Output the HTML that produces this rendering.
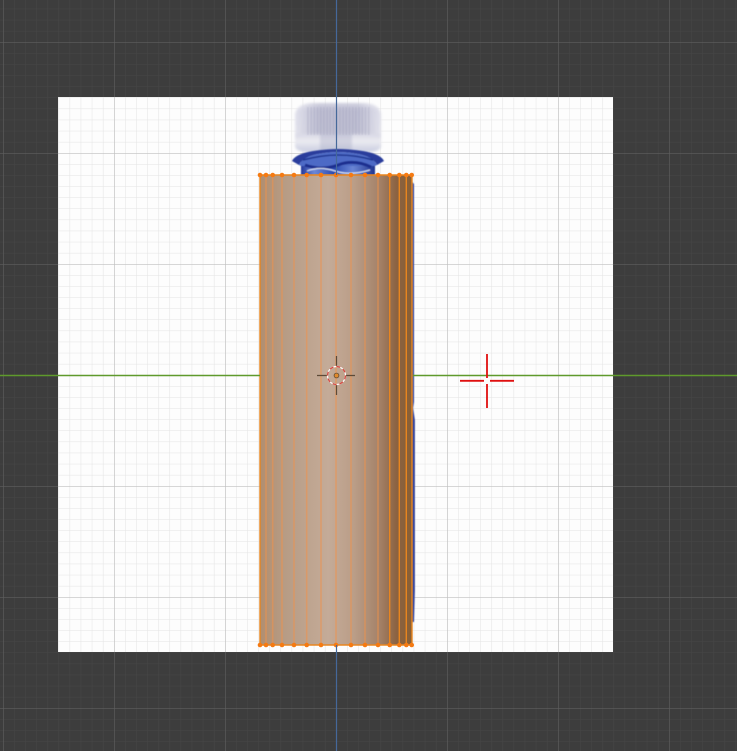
<!DOCTYPE html>
<html><head><meta charset="utf-8"><title>UV Editor</title>
<style>html,body{margin:0;padding:0;background:#3d3d3d}svg{display:block}</style></head>
<body>
<svg width="737" height="751" viewBox="0 0 737 751" xmlns="http://www.w3.org/2000/svg">
<defs>
<pattern id="dMinor" width="11.1" height="11.1" patternUnits="userSpaceOnUse" x="3" y="42">
<path d="M0 0H11.1M0 0V11.1" stroke="#474747" stroke-width="1" fill="none"/>
</pattern>
<pattern id="dMajor" width="111" height="111" patternUnits="userSpaceOnUse" x="3" y="42">
<path d="M0 0H111M0 0V111" stroke="#5f5f5f" stroke-width="1.2" fill="none"/>
</pattern>
<pattern id="lMinor" width="11.1" height="11.1" patternUnits="userSpaceOnUse" x="3" y="42">
<path d="M0 0H11.1M0 0V11.1" stroke="#e3e3e3" stroke-width="1" fill="none"/>
</pattern>
<pattern id="lMajor" width="111" height="111" patternUnits="userSpaceOnUse" x="3" y="42">
<path d="M0 0H111M0 0V111" stroke="#bfbfbf" stroke-width="1.3" fill="none"/>
</pattern>
<linearGradient id="body" x1="0" x2="1" y1="0" y2="0">
<stop offset="0" stop-color="#b08e70"/>
<stop offset=".15" stop-color="#b69b84"/>
<stop offset=".45" stop-color="#c4ab98"/>
<stop offset=".62" stop-color="#ba9d87"/>
<stop offset=".78" stop-color="#a5836a"/>
<stop offset=".9" stop-color="#8b6241"/>
<stop offset="1" stop-color="#8a5f34"/>
</linearGradient>
<linearGradient id="cap" x1="0" x2="0" y1="0" y2="1">
<stop offset="0" stop-color="#dcdcea" stop-opacity=".5"/>
<stop offset=".15" stop-color="#d2d2e2"/>
<stop offset=".6" stop-color="#d4d4e2"/>
<stop offset=".78" stop-color="#ebebf1"/>
<stop offset="1" stop-color="#c8ccdf"/>
</linearGradient>
<linearGradient id="capx" x1="0" x2="1" y1="0" y2="0">
<stop offset="0" stop-color="#fff" stop-opacity=".35"/>
<stop offset=".28" stop-color="#8e8fae" stop-opacity=".3"/>
<stop offset=".72" stop-color="#8e8fae" stop-opacity=".3"/>
<stop offset="1" stop-color="#fff" stop-opacity=".35"/>
</linearGradient>
<pattern id="rib" width="3.2" height="40" patternUnits="userSpaceOnUse">
<rect width="1.5" height="40" fill="#8f90b0" opacity=".25"/>
</pattern>
<linearGradient id="neck" x1="0" x2="1" y1="0" y2="0">
<stop offset="0" stop-color="#24389a"/>
<stop offset=".18" stop-color="#6d88d6"/>
<stop offset=".45" stop-color="#2a49b0"/>
<stop offset=".7" stop-color="#6a85d4"/>
<stop offset="1" stop-color="#20348f"/>
</linearGradient>
<filter id="b1" x="-10%" y="-10%" width="120%" height="120%"><feGaussianBlur stdDeviation="1.3"/></filter>
<filter id="b2" x="-10%" y="-10%" width="120%" height="120%"><feGaussianBlur stdDeviation=".6"/></filter>
</defs>

<rect width="737" height="751" fill="#3d3d3d"/>
<rect width="737" height="751" fill="url(#dMinor)"/>
<rect width="737" height="751" fill="url(#dMajor)"/>

<rect x="58" y="97" width="555" height="555" fill="#fdfdfd"/>
<rect x="58" y="97" width="555" height="555" fill="url(#lMinor)"/>
<rect x="58" y="97" width="555" height="555" fill="url(#lMajor)"/>

<!-- bottle cap -->
<g filter="url(#b1)">
<path d="M295 114Q297 103 314 103H362Q379 103 381 114V146Q381 153 360 152H316Q295 153 295 146Z" fill="url(#cap)"/>
<path d="M295 114Q297 103 314 103H362Q379 103 381 114V134H295Z" fill="url(#capx)"/>
<path d="M320 134V152H352V134Z" fill="#a4a6c2" opacity=".35"/>
</g>
<rect x="306" y="107" width="64" height="28" fill="url(#rib)" filter="url(#b2)"/>
<!-- neck -->
<g filter="url(#b2)">
<rect x="301" y="157" width="74" height="18" fill="url(#neck)"/>
<path d="M292 161Q297 150 338 149Q379 150 384 161L377 165Q372 153 338 152Q304 153 299 165Z" fill="#2a3d9c"/>
<path d="M299 165Q304 153 338 152Q372 153 377 165L375 166H301Z" fill="#4d6bc6"/>
<path d="M303 160Q322 155 338 155Q356 155 373 160" stroke="#1f3490" stroke-width="1.6" fill="none"/>
<path d="M305 165Q322 171 338 165T371 167" stroke="#1b2f8f" stroke-width="3" fill="none"/>
<path d="M307 171Q320 166 335 171T370 170" stroke="#d4def5" stroke-width="1.2" fill="none"/>
</g>

<!-- blue edge behind body -->
<path d="M412 182L414 184V402L413 408L415 420V590L414 622H410V182Z" fill="#3d4a9a" filter="url(#b2)"/>

<!-- UV island -->
<rect x="260" y="175" width="152" height="470" fill="url(#body)"/>
<g stroke="#f0924a" stroke-width="1.6" fill="none" opacity=".55">
<path d="M266 175V645M272.7 175V645M282 175V645M294 175V645M306.7 175V645M321 175V645M336 175V645M351 175V645M365 175V645M378 175V645"/>
</g>
<g stroke="#e8851f" stroke-width="1.4" fill="none">
<path d="M389.7 175V645M399.3 175V645M406.3 175V645"/>
<path d="M260 175H412V645H260Z"/>
</g>
<g fill="#f57a12">
<circle cx="260" cy="175" r="2.3"/><circle cx="266" cy="175" r="2.3"/><circle cx="272.7" cy="175" r="2.3"/><circle cx="282" cy="175" r="2.3"/><circle cx="294" cy="175" r="2.3"/><circle cx="306.7" cy="175" r="2.3"/><circle cx="321" cy="175" r="2.3"/><circle cx="336" cy="175" r="2.3"/><circle cx="351" cy="175" r="2.3"/><circle cx="365" cy="175" r="2.3"/><circle cx="378" cy="175" r="2.3"/><circle cx="389.7" cy="175" r="2.3"/><circle cx="399.3" cy="175" r="2.3"/><circle cx="406.3" cy="175" r="2.3"/><circle cx="411.7" cy="175" r="2.3"/>
<circle cx="260" cy="645" r="2.3"/><circle cx="266" cy="645" r="2.3"/><circle cx="272.7" cy="645" r="2.3"/><circle cx="282" cy="645" r="2.3"/><circle cx="294" cy="645" r="2.3"/><circle cx="306.7" cy="645" r="2.3"/><circle cx="321" cy="645" r="2.3"/><circle cx="336" cy="645" r="2.3"/><circle cx="351" cy="645" r="2.3"/><circle cx="365" cy="645" r="2.3"/><circle cx="378" cy="645" r="2.3"/><circle cx="389.7" cy="645" r="2.3"/><circle cx="399.3" cy="645" r="2.3"/><circle cx="406.3" cy="645" r="2.3"/><circle cx="411.7" cy="645" r="2.3"/>
</g>

<!-- axes -->
<path d="M0 375.5H260M413 375.5H737" stroke="#5f9a2c" stroke-width="1.4" fill="none"/>
<path d="M336.5 0V175M336.5 645V751" stroke="#45689a" stroke-width="1.2" fill="none"/>

<!-- pivot cursor -->
<path d="M317 375.5H327M345 375.5H355M336.5 356V366M336.5 385V395" stroke="#5d4a37" stroke-width="1.2" fill="none"/>
<circle cx="336.5" cy="375.5" r="9" fill="none" stroke="#fff" stroke-width="1.2"/>
<circle cx="336.5" cy="375.5" r="9" fill="none" stroke="#d8453f" stroke-width="1.2" stroke-dasharray="4 3"/>
<circle cx="336.5" cy="375.5" r="2.4" fill="#e08a2c" stroke="#5d4a37" stroke-width=".8"/>

<!-- 2D cursor -->
<path d="M460 380.8H484M490 380.8H514M487 354V378M487 384V408" stroke="#e01010" stroke-width="1.8" fill="none"/>
</svg>
</body></html>
